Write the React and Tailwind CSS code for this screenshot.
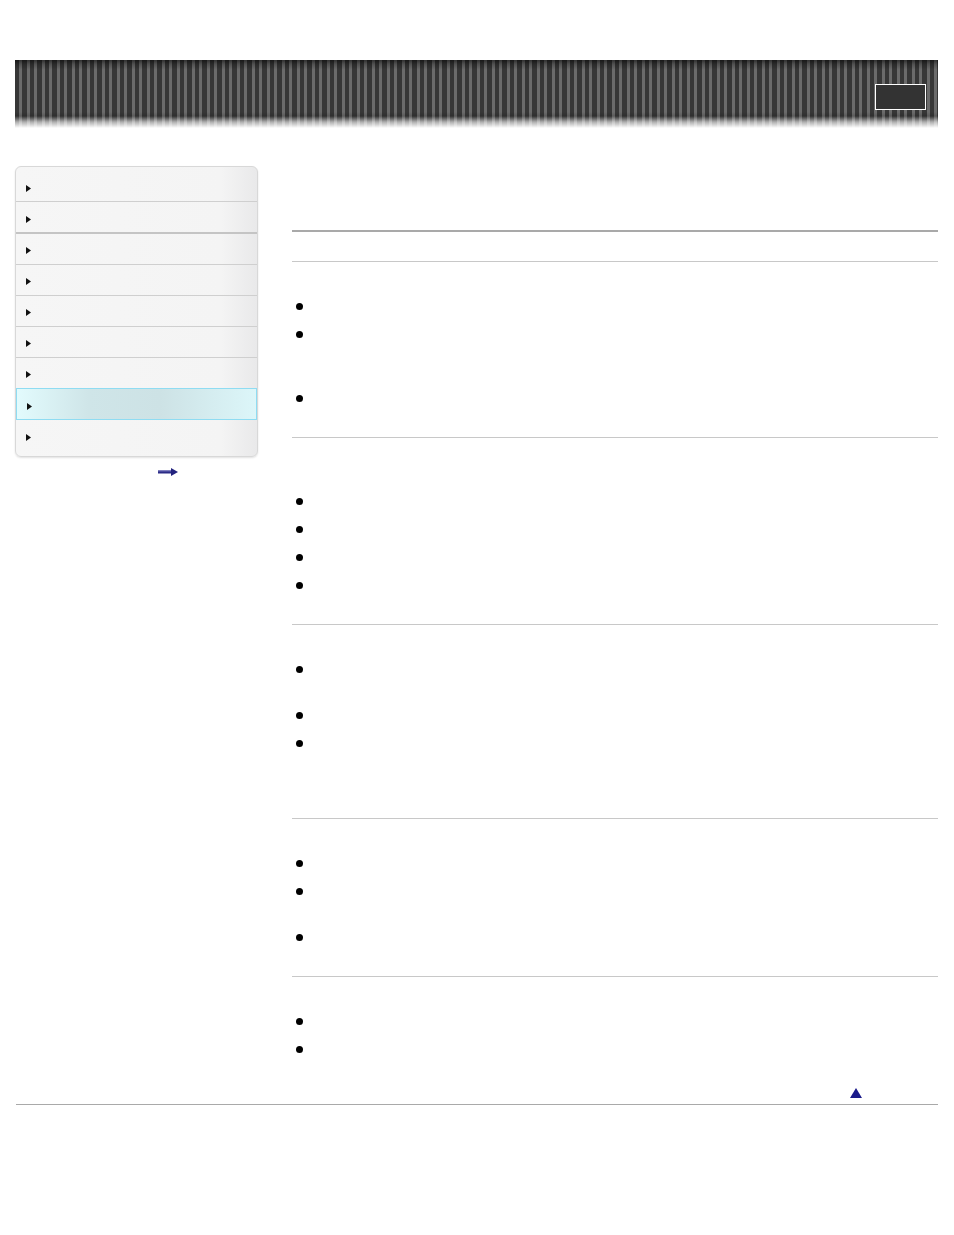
const navRows = [
  { h: 'h-[35px]', pt: 'pt-[18px]', border: 'border-b border-[#cfcfcf]' },
  { h: 'h-[32px]', pt: 'pt-[14px]', border: 'border-b-2 border-[#c4c4c4]' },
  { h: 'h-[31px]', pt: 'pt-[13px]', border: 'border-b border-[#cfcfcf]' },
  { h: 'h-[31px]', pt: 'pt-[13px]', border: 'border-b border-[#cfcfcf]' },
  { h: 'h-[31px]', pt: 'pt-[13px]', border: 'border-b border-[#cfcfcf]' },
  { h: 'h-[31px]', pt: 'pt-[13px]', border: 'border-b border-[#cfcfcf]' },
  { h: 'h-[30px]', pt: 'pt-[13px]', border: '' },
  { h: 'h-[32px]', pt: 'pt-[14px]', active: true },
  { h: 'h-[36px]', pt: 'pt-[14px]', border: '' },
];

// lines per bullet item, heading offset per section
const sections = [
  { pt: 'pt-[35px]', items: [1, 3, 1] },
  { pt: 'pt-[54px]', items: [1, 1, 1, 1] },
  { pt: 'pt-[35px]', items: [2, 1, 3] },
  { pt: 'pt-[35px]', items: [1, 2, 1] },
  { pt: 'pt-[35px]', items: [1, 1], last: true },
];

const lineHeights = { 1: 'h-[18px]', 2: 'h-[36px]', 3: 'h-[54px]' };

function Caret() {
  return (
    <svg width="5" height="7" viewBox="0 0 5 7" className="block">
      <polygon points="0,0 5,3.5 0,7" fill="#111" />
    </svg>
  );
}

function Sidebar() {
  return (
    <div className="w-[243px] shrink-0">
      <div className="rounded-[6px] border border-[#d8d8d8] bg-[linear-gradient(90deg,#f6f6f6_0%,#f4f4f4_85%,#e9e9ea_100%)] shadow-[0_1px_2px_rgba(0,0,0,0.12)] overflow-hidden">
        {navRows.map((row, i) => (
          <div
            key={i}
            className={
              row.active
                ? `${row.h} ${row.pt} pl-[10px] border border-[#8fdcf2] bg-[linear-gradient(90deg,#e2fbfd_0%,#cfe5e8_30%,#cde2e5_60%,#dcf6f9_100%)]`
                : `${row.h} ${row.pt} pl-[10px] ${row.border}`
            }
          >
            <Caret />
          </div>
        ))}
      </div>
      <div className="pl-[143px] pt-[11px]">
        <svg width="20" height="8" viewBox="0 0 20 8" className="block">
          <rect x="0" y="2.5" width="14" height="3" fill="#2b2b86" />
          <rect x="0" y="2.5" width="14" height="1" fill="#6a6ab8" />
          <polygon points="13,0 20,4 13,8" fill="#23237e" />
        </svg>
      </div>
    </div>
  );
}

function Section({ pt, items, last }) {
  return (
    <div className={`border-t border-[#c8c8c8] ${pt} ${last ? '' : 'pb-[20px]'}`}>
      {items.map((n, i) => (
        <div key={i} className={`flex ${lineHeights[n]} mb-[10px]`}>
          <div className="ml-[4px] mt-[6px] w-[7px] h-[7px] rounded-full bg-black" />
        </div>
      ))}
    </div>
  );
}

export default function App() {
  return (
    <div className="w-[954px] min-h-[1235px] bg-white font-['Liberation_Sans',Arial,sans-serif]">
      <div className="pt-[60px] pl-[15px]">
        <div className="relative w-[923px] h-[68px] bg-[linear-gradient(180deg,rgba(0,0,0,0.55)_0px,rgba(0,0,0,0.25)_4px,rgba(0,0,0,0)_10px,rgba(0,0,0,0)_52px,rgba(0,0,0,0.15)_56px,rgba(255,255,255,0.6)_62px,#ffffff_68px),repeating-linear-gradient(90deg,#373737_0px,#373737_4.5px,#6b6b6b_4.5px,#6b6b6b_7.5px)]">
          <div className="flex justify-end pt-[24px] pr-[12px]">
            <div className="w-[51px] h-[26px] border border-white bg-[#333333]" />
          </div>
        </div>
      </div>

      <div className="flex mt-[38px] pl-[15px]">
        <Sidebar />
        <div className="ml-[34px] w-[646px]">
          <div className="h-[64px]" />
          <div className="border-t-2 border-[#a9a9a9] h-[31px]" />
          {sections.map((s, i) => (
            <Section key={i} {...s} />
          ))}
          <div className="flex justify-end pr-[76px] mt-[30px] mb-[6px]">
            <svg width="12" height="10" viewBox="0 0 12 10" className="block">
              <polygon points="6,0 12,10 0,10" fill="#1b1b8a" />
            </svg>
          </div>
        </div>
      </div>

      <div className="ml-[16px] w-[922px] border-t border-[#a9a9a9]" />
    </div>
  );
}
